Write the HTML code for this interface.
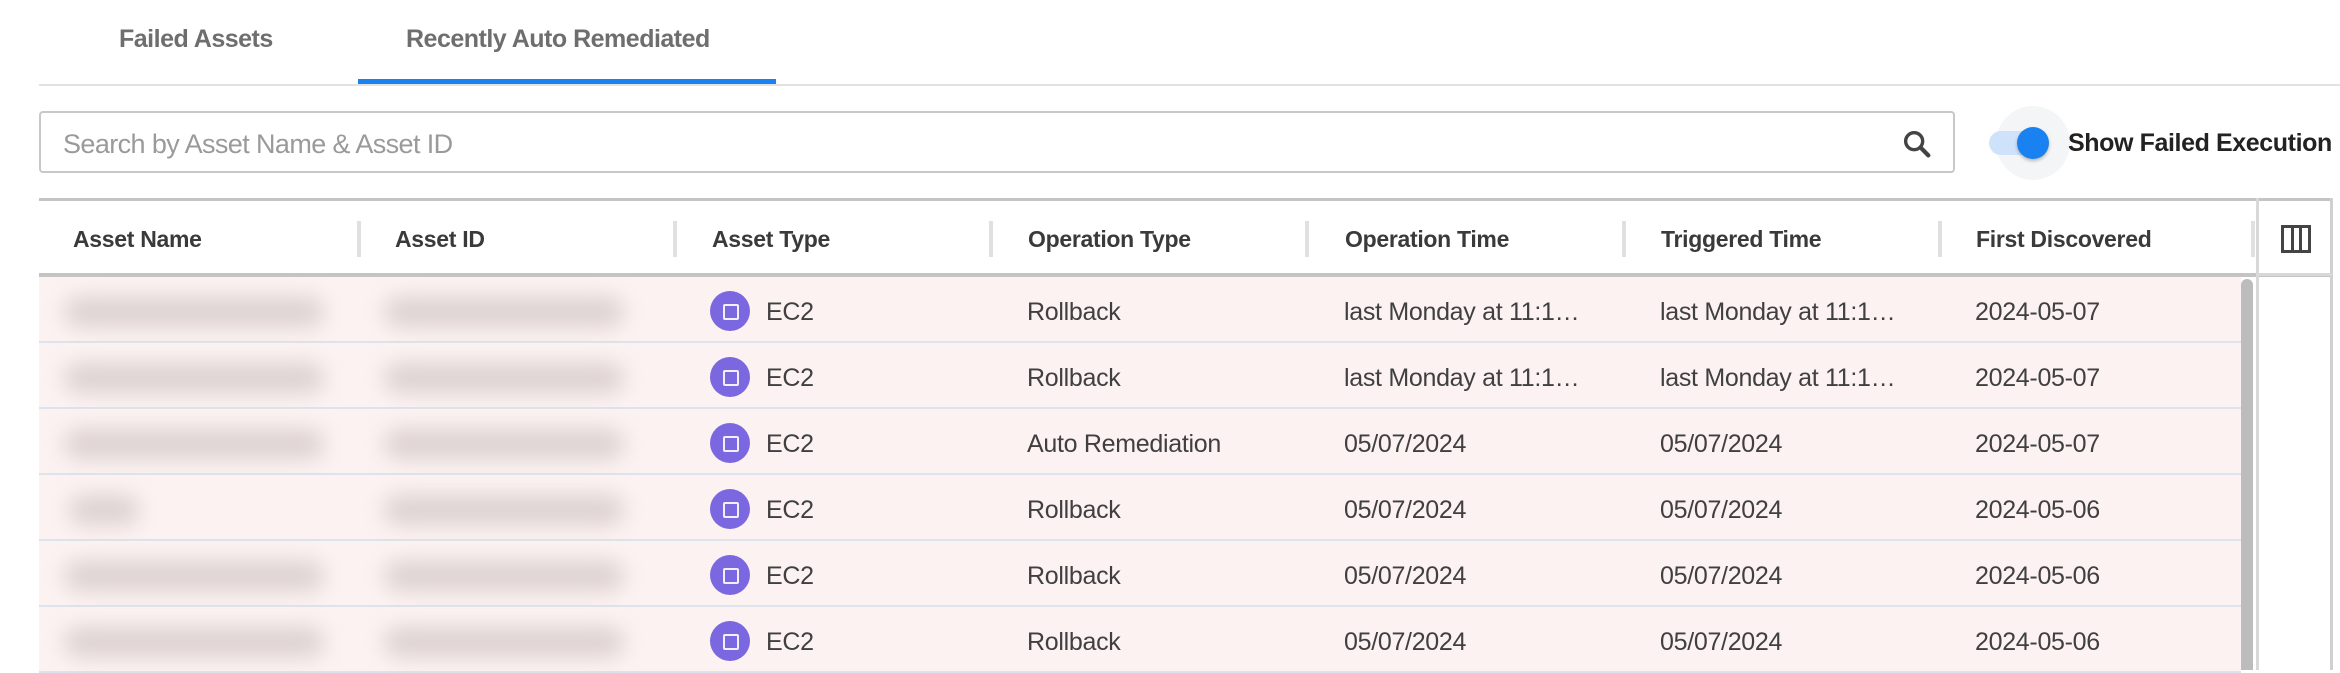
<!DOCTYPE html>
<html><head><meta charset="utf-8"><style>
*{margin:0;padding:0;box-sizing:border-box}
body{width:2340px;height:670px;overflow:hidden;background:#fff;font-family:"Liberation Sans",sans-serif;position:relative;color:#3d3d3d}
.a{position:absolute;white-space:nowrap}
.tab{font-size:25px;font-weight:bold;color:#6e6e6e;top:25px;letter-spacing:-0.5px}
.hd{font-size:23px;font-weight:bold;color:#3a3a3a;top:226px;letter-spacing:-0.3px}
.sep{position:absolute;top:221px;width:4px;height:36px;background:#e0e0e0}
.row{position:absolute;left:39px;width:2202px;height:66px;background:#fdf2f2;border-bottom:2px solid #dde3ec}
.c{position:absolute;font-size:25px;color:#404040;top:21px;white-space:nowrap;letter-spacing:-0.3px}
.ic{position:absolute;left:671px;top:14px;width:40px;height:40px;border-radius:50%;background:#7b68e0}
.ic:after{content:"";position:absolute;left:13px;top:13px;width:12px;height:12px;border:2px solid #fff;border-radius:2px;opacity:.9}
.blur{position:absolute;height:30px;background:#cfc3c3;filter:blur(11px);border-radius:14px;opacity:.7}
</style></head><body>
<div class="a tab" style="left:119px">Failed Assets</div>
<div class="a tab" style="left:406px">Recently Auto Remediated</div>
<div class="a" style="left:39px;top:84px;width:2301px;height:2px;background:#e2e2e2"></div>
<div class="a" style="left:358px;top:79px;width:418px;height:5px;background:#1a82f0"></div>

<div class="a" style="left:39px;top:111px;width:1916px;height:62px;border:2px solid #c8c8c8;border-radius:4px"></div>
<div class="a" style="left:63px;top:129px;font-size:27px;color:#9a9a9a;letter-spacing:-0.6px">Search by Asset Name &amp; Asset ID</div>
<svg class="a" style="left:1900px;top:127px" width="34" height="34" viewBox="0 0 24 24"><circle cx="10" cy="10" r="6" fill="none" stroke="#444" stroke-width="2.4"/><path d="M14.5 14.5 L20 20" stroke="#444" stroke-width="3" stroke-linecap="round"/></svg>

<div class="a" style="left:1996px;top:106px;width:74px;height:74px;border-radius:50%;background:#f4f5f7"></div>
<div class="a" style="left:1989px;top:131px;width:60px;height:24px;border-radius:12px;background:#cfe2fb"></div>
<div class="a" style="left:2017px;top:127px;width:32px;height:32px;border-radius:50%;background:#1a82f0;box-shadow:0 2px 3px rgba(0,0,0,.25)"></div>
<div class="a" style="left:2068px;top:129px;font-size:25px;font-weight:bold;color:#222;letter-spacing:-0.4px">Show Failed Execution</div>

<div class="a" style="left:39px;top:198px;width:2293px;height:3px;background:#c4c4c4"></div>
<div class="a" style="left:39px;top:273px;width:2293px;height:4px;background:#c4c4c4"></div>
<div class="a" style="left:2256px;top:198px;width:3px;height:472px;background:#d8d8d8"></div>
<div class="a" style="left:2330px;top:198px;width:3px;height:472px;background:#d0d0d0"></div>
<div class="a" style="left:2257px;top:273px;width:75px;height:3px;background:#d8d8d8"></div>

<div class="a hd" style="left:73px">Asset Name</div>
<div class="a hd" style="left:395px">Asset ID</div>
<div class="a hd" style="left:712px">Asset Type</div>
<div class="a hd" style="left:1028px">Operation Type</div>
<div class="a hd" style="left:1345px">Operation Time</div>
<div class="a hd" style="left:1661px">Triggered Time</div>
<div class="a hd" style="left:1976px">First Discovered</div>
<div class="sep" style="left:357px"></div><div class="sep" style="left:673px"></div><div class="sep" style="left:989px"></div><div class="sep" style="left:1305px"></div><div class="sep" style="left:1622px"></div><div class="sep" style="left:1938px"></div><div class="sep" style="left:2251px"></div>
<svg class="a" style="left:2281px;top:225px" width="30" height="28" viewBox="0 0 30 28"><rect x="1.5" y="1.5" width="27" height="25" fill="none" stroke="#444" stroke-width="3"/><rect x="10" y="2" width="3" height="24" fill="#444"/><rect x="18" y="2" width="3" height="24" fill="#444"/></svg>

<div class="row" style="top:277px"><div class="blur" style="left:25px;top:20px;width:260px"></div><div class="blur" style="left:345px;top:20px;width:240px"></div><div class="ic"></div><div class="c" style="left:727px">EC2</div><div class="c" style="left:988px">Rollback</div><div class="c" style="left:1305px">last Monday at 11:1…</div><div class="c" style="left:1621px">last Monday at 11:1…</div><div class="c" style="left:1936px">2024-05-07</div></div>
<div class="row" style="top:343px"><div class="blur" style="left:25px;top:20px;width:260px"></div><div class="blur" style="left:345px;top:20px;width:240px"></div><div class="ic"></div><div class="c" style="left:727px">EC2</div><div class="c" style="left:988px">Rollback</div><div class="c" style="left:1305px">last Monday at 11:1…</div><div class="c" style="left:1621px">last Monday at 11:1…</div><div class="c" style="left:1936px">2024-05-07</div></div>
<div class="row" style="top:409px"><div class="blur" style="left:25px;top:20px;width:260px"></div><div class="blur" style="left:345px;top:20px;width:240px"></div><div class="ic"></div><div class="c" style="left:727px">EC2</div><div class="c" style="left:988px">Auto Remediation</div><div class="c" style="left:1305px">05/07/2024</div><div class="c" style="left:1621px">05/07/2024</div><div class="c" style="left:1936px">2024-05-07</div></div>
<div class="row" style="top:475px"><div class="blur" style="left:30px;top:20px;width:70px"></div><div class="blur" style="left:345px;top:20px;width:240px"></div><div class="ic"></div><div class="c" style="left:727px">EC2</div><div class="c" style="left:988px">Rollback</div><div class="c" style="left:1305px">05/07/2024</div><div class="c" style="left:1621px">05/07/2024</div><div class="c" style="left:1936px">2024-05-06</div></div>
<div class="row" style="top:541px"><div class="blur" style="left:25px;top:20px;width:260px"></div><div class="blur" style="left:345px;top:20px;width:240px"></div><div class="ic"></div><div class="c" style="left:727px">EC2</div><div class="c" style="left:988px">Rollback</div><div class="c" style="left:1305px">05/07/2024</div><div class="c" style="left:1621px">05/07/2024</div><div class="c" style="left:1936px">2024-05-06</div></div>
<div class="row" style="top:607px"><div class="blur" style="left:25px;top:20px;width:260px"></div><div class="blur" style="left:345px;top:20px;width:240px"></div><div class="ic"></div><div class="c" style="left:727px">EC2</div><div class="c" style="left:988px">Rollback</div><div class="c" style="left:1305px">05/07/2024</div><div class="c" style="left:1621px">05/07/2024</div><div class="c" style="left:1936px">2024-05-06</div></div>

<div class="a" style="left:2241px;top:279px;width:12px;height:391px;border-radius:6px 6px 0 0;background:#bcbcbc"></div>
</body></html>
